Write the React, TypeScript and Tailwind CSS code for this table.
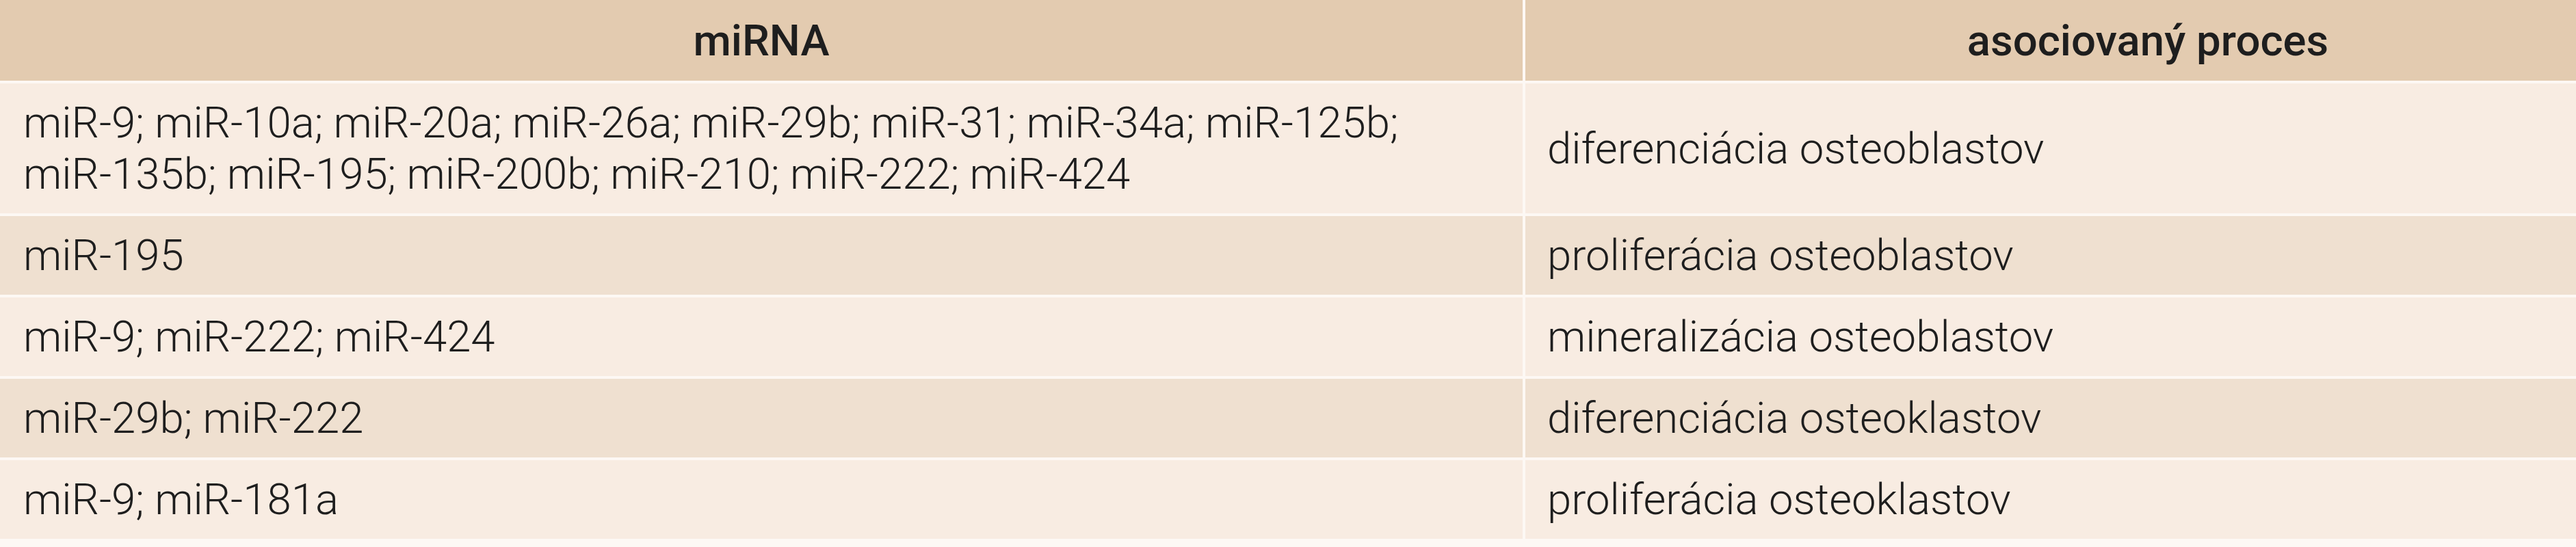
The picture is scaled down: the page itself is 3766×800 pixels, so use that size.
import React from "react";

const rows: { mirna: React.ReactNode; process: string }[] = [
  {
    mirna: (
      <>
        miR-9; miR-10a; miR-20a; miR-26a; miR-29b; miR-31; miR-34a; miR-125b;
        <br />
        miR-135b; miR-195; miR-200b; miR-210; miR-222; miR-424
      </>
    ),
    process: "diferenciácia osteoblastov",
  },
  { mirna: "miR-195", process: "proliferácia osteoblastov" },
  { mirna: "miR-9; miR-222; miR-424", process: "mineralizácia osteoblastov" },
  { mirna: "miR-29b; miR-222", process: "diferenciácia osteoklastov" },
  { mirna: "miR-9; miR-181a", process: "proliferácia osteoklastov" },
];

export default function App() {
  return (
    <div
      className="w-[3766px] h-[800px] overflow-hidden bg-[#fdf8f4] text-[#1e1e1e]"
      style={{ fontFamily: "Roboto, 'Liberation Sans', sans-serif" }}
    >
      <div className="w-[4050px] grid grid-cols-[2226px_1fr] gap-x-[4px] gap-y-[4px]">
        <div className="h-[118px] bg-[#e3cbb0] flex items-center justify-center text-[63.5px] font-medium leading-[75px]">
          miRNA
        </div>
        <div className="h-[118px] bg-[#e3cbb0] flex items-center justify-center text-[63.5px] font-medium leading-[75px]">
          asociovaný proces
        </div>
        {rows.map((r, i) => {
          const bg = i % 2 === 0 ? "bg-[#f8ece2]" : "bg-[#efe0d0]";
          const h = i === 0 ? "h-[190px]" : "h-[115px]";
          return (
            <React.Fragment key={i}>
              <div
                className={`${bg} ${h} flex items-center pl-[34px] text-[63.5px] font-light leading-[75px]`}
              >
                <div>{r.mirna}</div>
              </div>
              <div
                className={`${bg} ${h} flex items-center pl-[32px] text-[63.5px] font-light leading-[75px]`}
              >
                {r.process}
              </div>
            </React.Fragment>
          );
        })}
      </div>
    </div>
  );
}
